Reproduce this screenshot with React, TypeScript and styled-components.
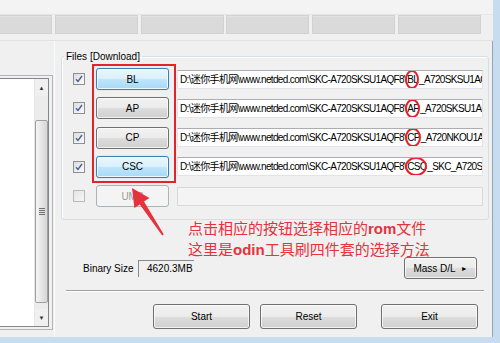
import React from 'react';
import styled, { createGlobalStyle, css } from 'styled-components';

const UI_FONT = `"Liberation Sans", "Noto Sans CJK SC", sans-serif`;
const CJK_FONT = `"Noto Sans CJK SC", "Liberation Sans", sans-serif`;
const ANNOTATE_RED = "#e5323c";
const PATH = "D:\\迷你手机网\\www.netded.com\\SKC-A720SKSU1AQF8\\";

const GlobalStyle = createGlobalStyle`
  html, body {
    margin: 0;
    padding: 0;
    width: 500px;
    height: 343px;
    overflow: hidden;
    background: #f0f0f0;
  }
  * { box-sizing: border-box; }
`;

const Window = styled.div`
  width: 500px;
  height: 343px;
  display: flex;
  flex-direction: column;
  background: #f0f0f0;
  border-right: 7px solid #c8dcf0;
  border-bottom: 6px solid #c8dcf0;
  font-family: ${UI_FONT};
  font-size: 10px;
  color: #000;
  overflow: hidden;
`;

const TopStrip = styled.div`
  height: 15px;
  background: #f3f3f3;
  border-bottom: 1px solid #e4e4e4;
`;

const StatusBar = styled.div`
  display: flex;
  gap: 2.8px;
  height: 19px;
  margin-left: -31px;
`;

const StatusCell = styled.div`
  width: 83px;
  flex-shrink: 0;
  background: #dadada;
  border: 1px solid #d2d2d2;
  box-shadow: inset 0 1px 0 #e2e2e2;
`;

const Divider = styled.div`
  height: 7px;
  border-bottom: 1px solid #e2e2e2;
`;

const Body = styled.div`
  flex: 1;
  display: flex;
  width: 493px;
  border-right: 1px solid #8fa6bf;
`;

const LeftPane = styled.div`
  width: 55px;
  flex-shrink: 0;
  padding: 34px 0 7px 0;
  border-right: 1px solid #fbfbfb;
`;

const ListFrame = styled.div`
  width: 53px;
  height: 100%;
  padding: 2px 3px 2px 0;
  border: 1px solid #b4b4b4;
  border-left: none;
`;

const ListBox = styled.div`
  height: 100%;
  display: flex;
  background: #fff;
  border: 1px solid #828790;
  border-left: none;
`;

const ListArea = styled.div`
  flex: 1;
`;

const ScrollBar = styled.div`
  width: 14px;
  display: flex;
  flex-direction: column;
  background: #ececec;
  border-left: 1px solid #e6e6e6;
`;

const ScrollButton = styled.div`
  height: 17px;
  display: flex;
  align-items: center;
  justify-content: center;
  font-size: 6px;
  color: #333;
  background: #f0f0f0;
  ${p => p.$bottom && css`margin-top: auto;`}
`;

const Thumb = styled.div`
  height: 183px;
  margin-top: 24px;
  display: flex;
  align-items: center;
  justify-content: center;
  border: 1px solid #a0a0a0;
  border-radius: 2px;
  background: linear-gradient(to right, #f4f4f4, #e6e6e6 50%, #d6d6d6);
`;

const Gripper = styled.div`
  width: 6px;
  height: 7px;
  background: repeating-linear-gradient(to bottom, #6f6f6f 0 1px, transparent 1px 2px);
`;

const RightPane = styled.div`
  width: 437px;
  flex-shrink: 0;
  position: relative;
  display: flex;
  flex-direction: column;
  padding: 9px 0 7px 0;
`;

const FilesGroup = styled.fieldset`
  width: 428px;
  margin: 0 0 0 6px;
  padding: 5px 5px 12px 11px;
  border: 1px solid #d5dfe5;
  border-radius: 3px;
  box-shadow: 1px 1px 0 #fff inset;
  min-width: 0;
`;

const GroupTitle = styled.legend`
  margin-left: -9px;
  padding: 0 2px;
  font-size: 10px;
  line-height: 13px;
`;

const Rows = styled.div`
  display: flex;
  flex-direction: column;
  gap: 7.3px;
`;

const Row = styled.div`
  height: 22px;
  display: flex;
  align-items: center;
`;

const CheckBox = styled.div`
  width: 12px;
  height: 12px;
  flex-shrink: 0;
  margin-right: 11px;
  border: 1px solid #8e8f8f;
  background: linear-gradient(135deg, #dcdcdc, #fbfbfb);
  padding: 1px;
  display: flex;
  align-items: center;
  justify-content: center;
  opacity: ${p => (p.$dim ? 0.55 : 1)};
`;

const buttonBase = css`
  font-family: ${UI_FONT};
  font-size: 10px;
  color: #000;
  border: 1px solid #707070;
  border-radius: 3px;
  background: linear-gradient(#f2f2f2 0%, #ebebeb 50%, #dddddd 51%, #cfcfcf 100%);
  box-shadow: inset 0 0 0 1px rgba(255, 255, 255, 0.7);
  padding: 0;
  display: flex;
  align-items: center;
  justify-content: center;
  flex-shrink: 0;
`;

const FileButton = styled.button`
  ${buttonBase};
  width: 73px;
  height: 22px;
  margin-right: 8px;
  ${p => p.$hot && css`
    border-color: #3c7fb1;
    background: linear-gradient(#eaf6fd 0%, #d9f0fc 50%, #bee6fd 51%, #a7d9f5 100%);
    box-shadow: inset 0 0 0 1px rgba(255, 255, 255, 0.8), 0 0 1px #6cc4ee;
  `}
  ${p => p.$disabled && css`
    border-color: #adb2b5;
    background: #f4f4f4;
    color: #9a9a9a;
    box-shadow: none;
  `}
`;

const PathField = styled.div`
  width: 306px;
  height: 19px;
  flex-shrink: 0;
  background: #fff;
  border: 1px solid #e2e3ea;
  border-top-color: #abadb3;
  padding: 0 2px;
  white-space: nowrap;
  overflow: hidden;
  line-height: 17px;
  font-size: 10px;
  letter-spacing: -0.65px;
  ${p => p.$empty && css`background: #f4f4f4; border-color: #d9d9d9;`}
`;

const Circled = styled.span`
  position: relative;
  display: inline-block;
  line-height: 13px;
  margin: 0 1px;

  &::after {
    content: "";
    position: absolute;
    left: -2px;
    right: -1px;
    top: -3px;
    bottom: -3px;
    border: 2px solid #e3222b;
    border-radius: 50%;
  }
`;

const SizeRow = styled.div`
  display: flex;
  align-items: center;
  height: 22px;
  margin-top: 37px;
  padding: 0 15px 0 28px;
`;

const SizeLabel = styled.span`
  margin-right: 4px;
`;

const SizeBox = styled.div`
  width: 56px;
  height: 17px;
  border-top: 1px solid #8a8a8a;
  border-left: 1px solid #8a8a8a;
  text-align: right;
  padding: 2px 1px 0 0;
`;

const MassButton = styled.button`
  ${buttonBase};
  margin-left: auto;
  width: 73px;
  height: 22px;
  gap: 5px;
`;

const Separator = styled.div`
  height: 2px;
  margin: 11px 8px 0 11px;
  border-top: 1px solid #a0a0a0;
  border-bottom: 1px solid #fff;
`;

const ActionRow = styled.div`
  display: flex;
  margin-top: 12px;
  padding-left: 98px;
`;

const ActionButton = styled.button`
  ${buttonBase};
  width: 97px;
  height: 25px;
  margin-left: ${p => p.$gap || 0}px;
`;

const RedFrame = styled.div`
  position: absolute;
  left: 37px;
  top: 23px;
  width: 84px;
  height: 119px;
  border: 2px solid #e3222b;
  pointer-events: none;
`;

const ArrowMark = styled.svg`
  position: absolute;
  left: 68px;
  top: 144px;
  overflow: visible;
`;

const Annotation = styled.div`
  position: absolute;
  left: 133px;
  top: 177px;
  font-family: ${CJK_FONT};
  font-size: 15px;
  line-height: 20px;
  color: ${ANNOTATE_RED};
  white-space: nowrap;

  b {
    font-family: "Liberation Sans", sans-serif;
    font-weight: bold;
  }
`;

interface FileRow {
  label: string;
  checked: boolean;
  hot?: boolean;
  disabled?: boolean;
  rest?: string;
}

const fileRows: FileRow[] = [
  { label: "BL", checked: true, hot: true, rest: "_A720SKSU1AQF8_CL12569834_QB16530762_REV00_user_low_ship.tar.md5" },
  { label: "AP", checked: true, rest: "_A720SKSU1AQF8_CL12569834_QB16530762_REV00_user_low_ship.tar.md5" },
  { label: "CP", checked: true, rest: "_A720NKOU1AQF8_CP8371296_CL12569834_QB16530762.tar.md5" },
  { label: "CSC", checked: true, hot: true, rest: "_SKC_A720SSKC1AQF8_CL12569834_QB16530762.tar.md5" },
  { label: "UMS", checked: false, disabled: true },
];

const CheckMark = () => (
  <svg width="8" height="8" viewBox="0 0 8 8">
    <path d="M1 4.2 L3 6.5 L7 1" fill="none" stroke="#4a5f97" strokeWidth="1.4" />
  </svg>
);

export default function App() {
  return (
    <>
      <GlobalStyle />
      <Window>
        <TopStrip />
        <StatusBar>
          {Array.from({ length: 6 }).map((_, i) => <StatusCell key={i} />)}
        </StatusBar>
        <Divider />
        <Body>
          <LeftPane>
            <ListFrame>
              <ListBox>
                <ListArea />
                <ScrollBar>
                  <ScrollButton>▲</ScrollButton>
                  <Thumb><Gripper /></Thumb>
                  <ScrollButton $bottom>▼</ScrollButton>
                </ScrollBar>
              </ListBox>
            </ListFrame>
          </LeftPane>
          <RightPane>
            <FilesGroup>
              <GroupTitle>Files [Download]</GroupTitle>
              <Rows>
                {fileRows.map(r => (
                  <Row key={r.label}>
                    <CheckBox $dim={r.disabled}>{r.checked && <CheckMark />}</CheckBox>
                    <FileButton $hot={r.hot} $disabled={r.disabled}>{r.label}</FileButton>
                    <PathField $empty={!r.rest}>
                      {r.rest && (
                        <>
                          {PATH}
                          <Circled>{r.label}</Circled>
                          {r.rest}
                        </>
                      )}
                    </PathField>
                  </Row>
                ))}
              </Rows>
            </FilesGroup>
            <SizeRow>
              <SizeLabel>Binary Size</SizeLabel>
              <SizeBox>4620.3MB</SizeBox>
              <MassButton>Mass D/L <span style={{ fontSize: 7 }}>►</span></MassButton>
            </SizeRow>
            <Separator />
            <ActionRow>
              <ActionButton>Start</ActionButton>
              <ActionButton $gap={10}>Reset</ActionButton>
              <ActionButton $gap={24}>Exit</ActionButton>
            </ActionRow>

            <RedFrame />
            <ArrowMark width="50" height="55" viewBox="0 0 50 55">
              <polygon
                points="9,3 26.4,13 21,16.6 40.8,49.4 39.2,50.6 16.8,19.4 11.4,23"
                fill={ANNOTATE_RED}
              />
            </ArrowMark>
            <Annotation>
              <div>点击相应的按钮选择相应的<b>rom</b>文件</div>
              <div>这里是<b>odin</b>工具刷四件套的选择方法</div>
            </Annotation>
          </RightPane>
        </Body>
      </Window>
    </>
  );
}
